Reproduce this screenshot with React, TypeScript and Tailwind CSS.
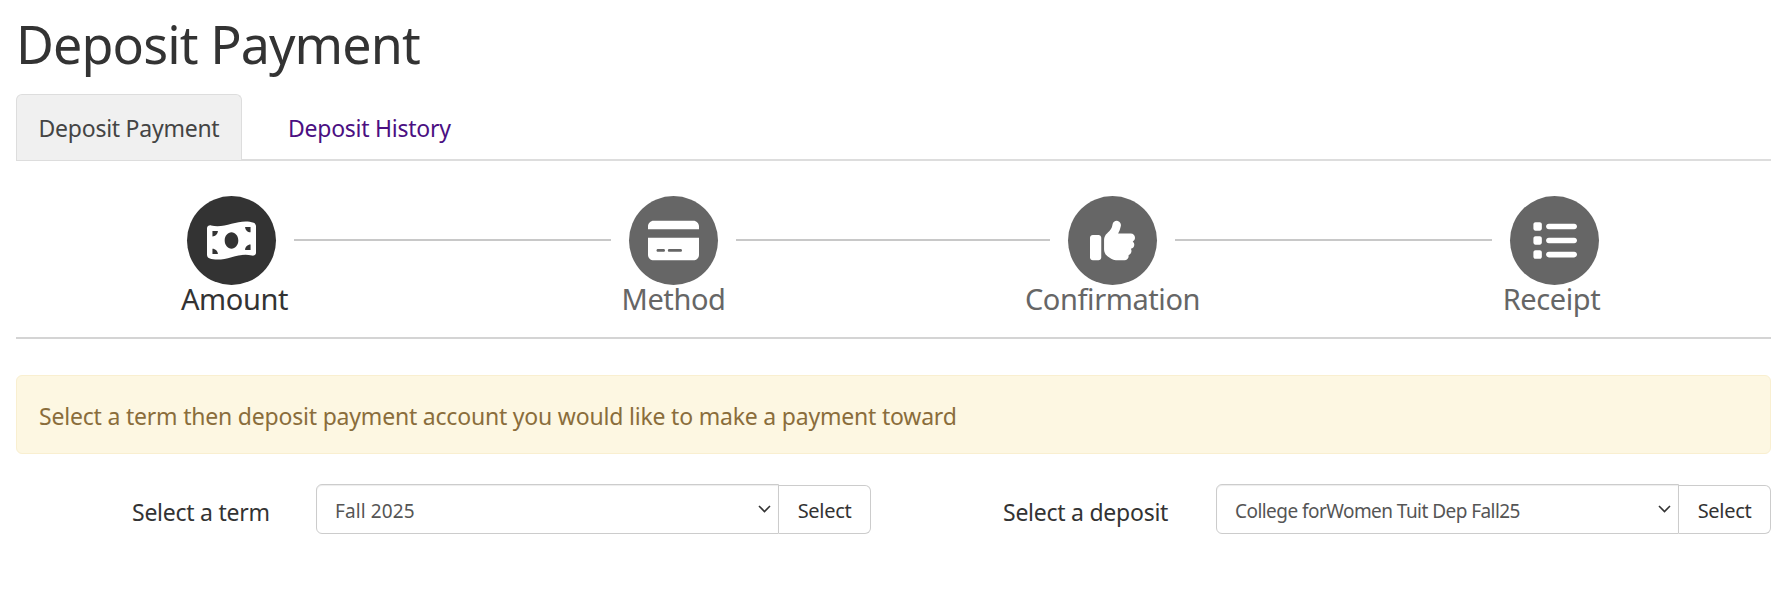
import { FaMoneyBillWave, FaCreditCard, FaThumbsUp, FaList } from "react-icons/fa6";

const font = { fontFamily: '"Noto Sans", sans-serif' };

const Step = ({ icon, label, active, extra }: { icon: React.ReactNode; label: string; active?: boolean; extra?: string }) => (
  <div className="flex w-[89px] shrink-0 flex-col items-center">
    <div className={`flex h-[89px] w-[89px] items-center justify-center rounded-full text-white ${active ? "bg-[#333333]" : "bg-[#666666]"}`}>
      {icon}
    </div>
    <div className={`whitespace-nowrap text-[29px] leading-[27px] tracking-[-0.4px] ${active ? "text-[#333333]" : "text-[#666666]"} ${extra ?? ""}`}>
      {label}
    </div>
  </div>
);

const Line = ({ w }: { w: string }) => <div className={`mx-[18px] mt-[43px] h-[2px] bg-[#c8c8c8] ${w}`} />;

const Picker = ({ label, value, labelClass, valueClass }: { label: string; value: string; labelClass: string; valueClass: string }) => (
  <div className="flex items-center">
    <label className={`whitespace-nowrap pt-[6px] text-[23px] tracking-[-0.25px] text-[#333333] ${labelClass}`}>{label}</label>
    <div className="relative w-[463px]">
      <select
        defaultValue={value}
        className={`h-[50px] w-full appearance-none rounded-l-[6px] border border-[#cccccc] bg-white pl-[18px] pt-[4px] text-[19px] text-[#555555] shadow-[inset_0_1px_1px_rgba(0,0,0,0.075)] ${valueClass}`}
      >
        <option>{value}</option>
      </select>
      <svg className="absolute right-[8px] top-[21px] h-[8px] w-[13px] text-[#333333]" viewBox="0 0 13 8" fill="none" stroke="currentColor" strokeWidth="1.6">
        <path d="M1 1l5.5 5.5L12 1" />
      </svg>
    </div>
    <button className="mt-px h-[49px] w-[92px] rounded-r-[6px] border border-l-0 border-[#cccccc] bg-white pt-[2px] text-[20px] tracking-[-0.3px] text-[#333333]">
      Select
    </button>
  </div>
);

export default function App() {
  return (
    <div className="h-[602px] bg-white px-4" style={font}>
      <h1 className="h-[94px] pt-[7px] text-[52px] leading-[74px] tracking-[-0.9px] text-[#333333]">Deposit Payment</h1>

      <div className="flex h-[67px] border-b-2 border-[#dddddd] text-[23px] tracking-[-0.25px]">
        <div className="flex h-[66px] w-[226px] items-center justify-center rounded-t-[6px] border border-b-0 border-[#dddddd] bg-[#f0f0f0] pt-[2px] text-[#444444]">
          Deposit Payment
        </div>
        <div className="flex items-center pl-[46px] pt-[3px] text-[#4b0f82]">Deposit History</div>
      </div>

      <div className="flex h-[178px] border-b-2 border-[#d4d4d4] pl-[171px] pt-[35px]">
        <Step active icon={<FaMoneyBillWave size={49} />} label="Amount" extra="pl-[6px]" />
        <Line w="w-[317px]" />
        <Step icon={<FaCreditCard size={51} />} label="Method" />
        <Line w="w-[314px]" />
        <Step icon={<FaThumbsUp size={45} />} label="Confirmation" />
        <Line w="w-[317px]" />
        <Step icon={<FaList size={45} />} label="Receipt" extra="pr-[6px]" />
      </div>

      <div className="mt-[36px] flex h-[79px] items-center rounded-[6px] border border-[#f9efd0] bg-[#fdf7e2] pl-[22px] pt-[3px] text-[23px] tracking-[-0.2px] text-[#8a6d3b]">
        Select a term then deposit payment account you would like to make a payment toward
      </div>

      <div className="mt-[30px] flex justify-between">
        <Picker label="Select a term" value="Fall 2025" labelClass="ml-[116px] w-[184px]" valueClass="tracking-[0.1px]" />
        <Picker label="Select a deposit" value="College forWomen Tuit Dep Fall25" labelClass="w-[213px]" valueClass="tracking-[-0.55px]" />
      </div>
    </div>
  );
}
